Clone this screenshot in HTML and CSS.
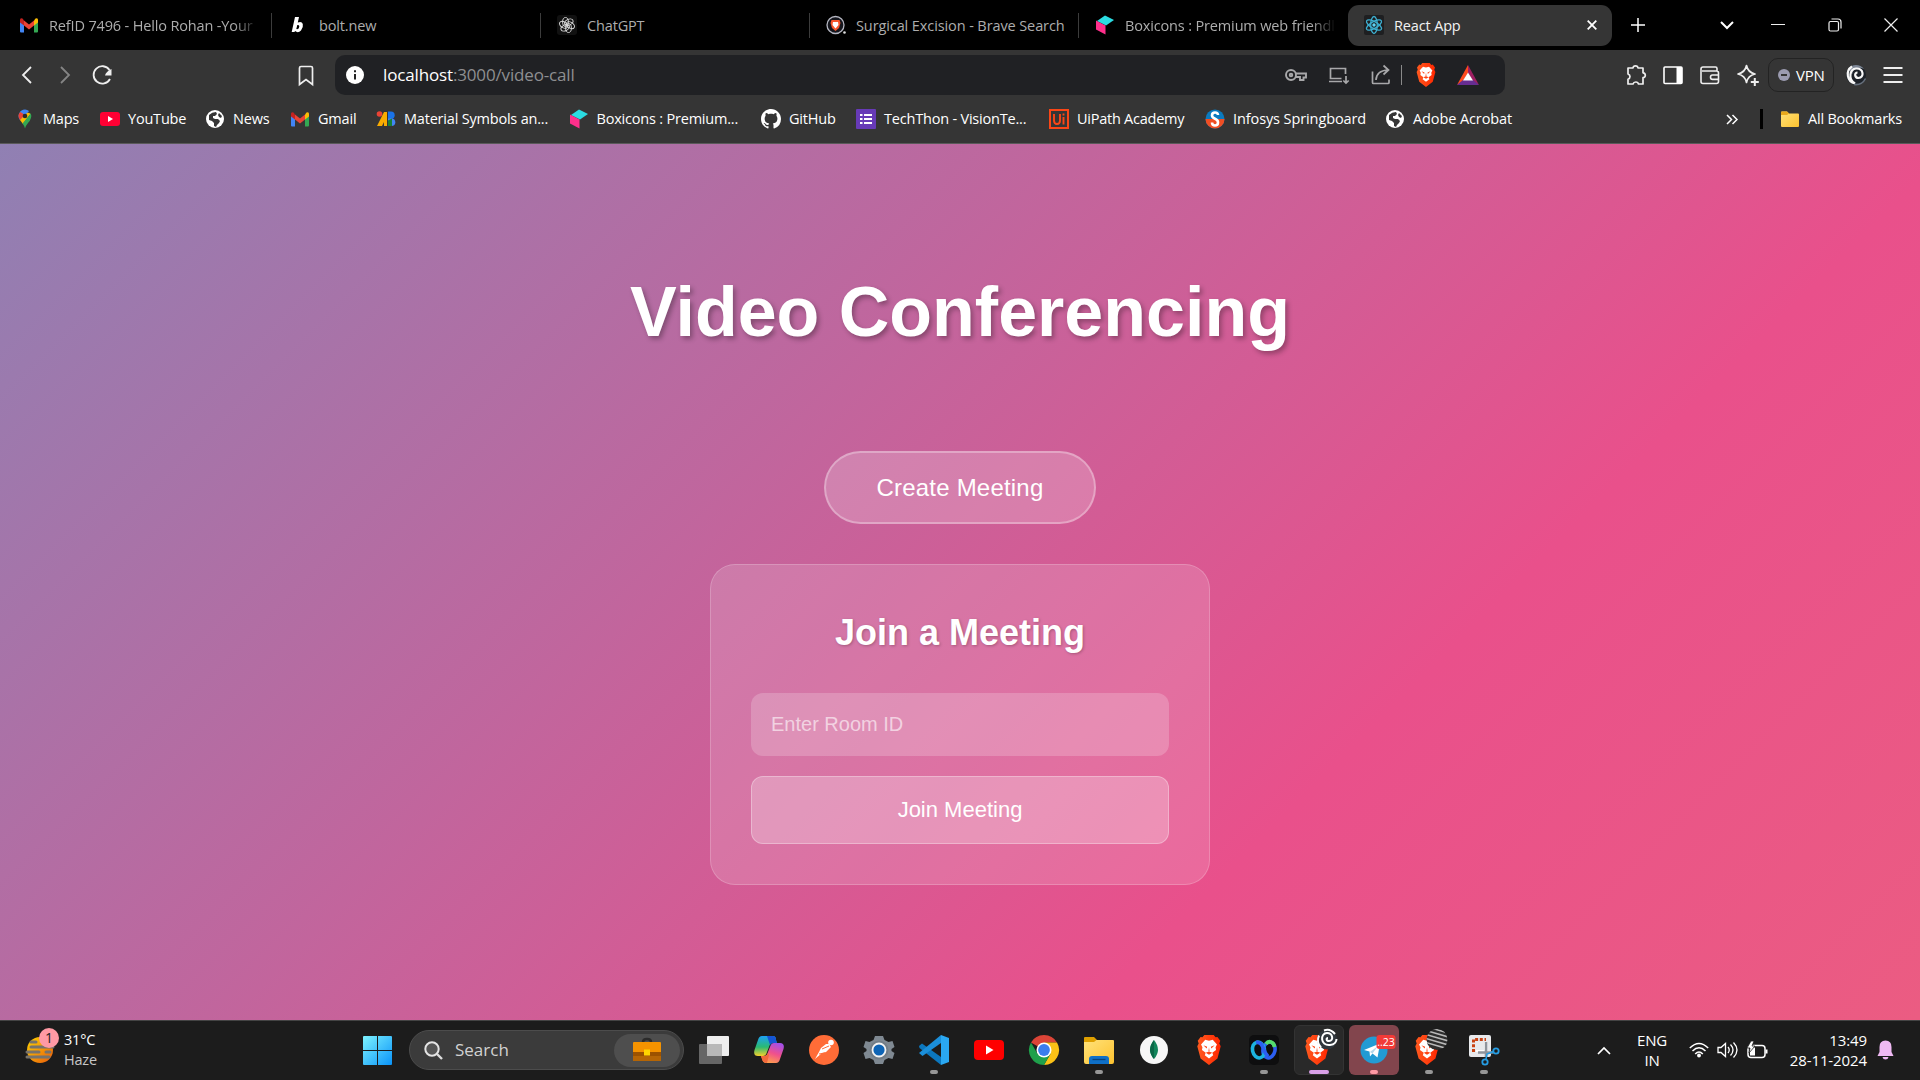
FILE: index.html
```html
<!DOCTYPE html>
<html lang="en">
<head>
<meta charset="utf-8">
<title>React App</title>
<link rel="stylesheet" href="styles.css">
</head>
<body>
<svg class="defs" width="0" height="0">
  <defs>
    <linearGradient id="lionFill" x1="0" y1="0" x2="1" y2="0"><stop offset="0" stop-color="#ff5a1f"/><stop offset="1" stop-color="#ff2600"/></linearGradient>
    <linearGradient id="win" x1="0" y1="0" x2="1" y2="1"><stop offset="0" stop-color="#7df3ff"/><stop offset="1" stop-color="#0a93f8"/></linearGradient>
    <linearGradient id="fold" x1="0" y1="0" x2="1" y2="1"><stop offset="0" stop-color="#ffe27a"/><stop offset="1" stop-color="#fdc22f"/></linearGradient>
  </defs>
  <symbol id="gmail" viewBox="0 0 20 20"><path d="M1 4.5v12q0 1 1 1h3V9z" fill="#4285f4"/><path d="M19 4.5v12q0 1-1 1h-3V9z" fill="#34a853"/><path d="M1 5v2.5L5 10.500V5.500L3.500 3.500Q1 2.300 1 5z" fill="#c5221f"/><path d="M19 5v2.500L15 10.500V5.500l1.500-2Q19 2.300 19 5z" fill="#fbbc04"/><path d="M5 5.500l5 4 5-4v5l-5 4-5-4z" fill="#ea4335"/></symbol>
  <symbol id="lion" viewBox="0 0 26 32"><path d="M6 2.500L8 0h10l2 2.500 2-.5 3 4-1 3 1.500 3-3.500 13L13 32 4 25 .5 12 2 9 1 6l3-4z" fill="url(#lionFill)"/><path d="M13 6l4-1 4.500 5-1.500 3 .5 3-4 3 1 2.500L13 25l-4.500-3.500 1-2.500-4-3 .5-3-1.500-3L9 5z" fill="#fff"/><path d="M7 11l4 1.500-.5 2zM19 11l-4 1.500.5 2zM13 13l-.7 5h1.400zM9.500 19l3.500-1.500 3.500 1.500-3.500 2z" fill="#ff4312"/></symbol>
  <symbol id="globe" viewBox="0 0 20 20"><circle cx="10" cy="10" r="9" fill="#fff"/><path d="M4 6Q7 3 11 3l1 2-2 2H8v2l2 1h3l2 2-1 2-2 2-1 2-2-1v-3l-2-2-3-1zM14 4l3 3-1 2-2-1-1-2z" fill="#353535"/></symbol>
  <symbol id="boxicons" viewBox="0 0 20 20"><path d="M10 .5l9 4.500-8 5.500-9-4.500z" fill="#2bdce2"/><path d="M1 5.500l9.500 5v9L1 14.500z" fill="#ff2f8b"/></symbol>
</svg>

<div class="browser">
  <header class="tabs">
    <div class="tab"><svg class="fav"><use href="#gmail"/></svg><span class="fade">RefID 7496 - Hello Rohan -Your</span></div>
    <div class="tab"><svg class="fav bolt" viewBox="0 0 20 20"><path d="M7 2h4L9.800 7.500q4-1.500 5 1.500.8 3.500-1.800 6.500-3 3-6 .5L6.500 17H3.700zM9.300 10l-1 4q2.700.8 3-2.500.1-2-2-1.500z" fill="#fff" fill-rule="evenodd"/></svg><span>bolt.new</span></div>
    <div class="tab"><svg class="fav" viewBox="0 0 20 20"><rect width="20" height="20" rx="3" fill="#111"/><g fill="none" stroke="#ddd" stroke-width=".9"><ellipse cx="8.500" cy="7" rx="2.900" ry="4.500" transform="rotate(0 10 10)"/><ellipse cx="8.500" cy="7" rx="2.900" ry="4.500" transform="rotate(60 10 10)"/><ellipse cx="8.500" cy="7" rx="2.900" ry="4.500" transform="rotate(120 10 10)"/><ellipse cx="8.500" cy="7" rx="2.900" ry="4.500" transform="rotate(180 10 10)"/><ellipse cx="8.500" cy="7" rx="2.900" ry="4.500" transform="rotate(240 10 10)"/><ellipse cx="8.500" cy="7" rx="2.900" ry="4.500" transform="rotate(300 10 10)"/></g></svg><span>ChatGPT</span></div>
    <div class="tab"><svg class="fav" viewBox="0 0 20 20"><circle cx="9.500" cy="10" r="8.500" fill="#14151c" stroke="#b5b7c2" stroke-width="1.300"/><path d="M5.500 5h8l1 3-1.500 5-3.500 3-3.500-3-1.500-5z" fill="#f7552b"/><path d="M7 7h5l.5 3-3 3.500-3-3.500z" fill="#fff"/><circle cx="18.500" cy="17.500" r="1.300" fill="#ddd"/></svg><span class="wide">Surgical Excision - Brave Search</span></div>
    <div class="tab last"><svg class="fav"><use href="#boxicons"/></svg><span class="fade">Boxicons : Premium web friendl</span></div>
    <div class="tab active"><svg class="fav" viewBox="0 0 20 20"><rect width="20" height="20" rx="2" fill="#1e1f21"/><g fill="none" stroke="#3dafd0" stroke-width="1.300"><ellipse cx="10" cy="10" rx="8.500" ry="3.300" transform="rotate(90 10 10)"/><ellipse cx="10" cy="10" rx="8.500" ry="3.300" transform="rotate(30 10 10)"/><ellipse cx="10" cy="10" rx="8.500" ry="3.300" transform="rotate(150 10 10)"/></g><circle cx="10" cy="10" r="1.700" fill="#5dd5f5"/></svg><span>React App</span><svg class="close" viewBox="0 0 10 10"><path d="M.7.7l8.600 8.600M9.300.7L.7 9.300" stroke="#fff" stroke-width="1.800"/></svg></div>
    <svg class="plus" viewBox="0 0 14 14"><path d="M7 0v14M0 7h14" stroke="#fff" stroke-width="1.500"/></svg>
    <div class="winctl">
      <svg width="14" height="10" viewBox="0 0 14 10"><path d="M1 2l6 6 6-6" fill="none" stroke="#fff" stroke-width="2"/></svg>
      <svg width="14" height="14" viewBox="0 0 14 14"><path d="M0 6.500h14" stroke="#eee"/></svg>
      <svg width="14" height="14" viewBox="0 0 14 14"><rect x="1" y="3.500" width="9.500" height="9.500" rx="1.500" fill="none" stroke="#eee" stroke-width="1.200"/><path d="M3.500 1h6.500q3 0 3 3v6.500" fill="none" stroke="#eee" stroke-width="1.200"/></svg>
      <svg width="14" height="14" viewBox="0 0 14 14"><path d="M.5.500l13 13M13.500.500l-13 13" stroke="#eee" stroke-width="1.200"/></svg>
    </div>
  </header>

  <nav class="toolbar">
    <div class="nav">
      <svg class="ico" viewBox="0 0 24 24"><path d="M16 4l-8 8 8 8" stroke="#eee" stroke-width="1.800"/></svg>
      <svg class="ico" viewBox="0 0 24 24"><path d="M8 4l8 8-8 8" stroke="#858585" stroke-width="1.800"/></svg>
      <svg class="ico" viewBox="0 0 24 24"><path d="M19.500 7A8.700 8.700 0 1 0 20 16" stroke="#eee" stroke-width="1.800"/><path d="M21.500 6v6.500h-6.500q1-4 6.500-6.500z" fill="#eee"/></svg>
    </div>
    <svg class="ico mark" viewBox="0 0 24 24"><path d="M5.500 5q0-1.500 1.500-1.500h10q1.500 0 1.500 1.500v16.500L12 16.500l-6.500 5z" stroke="#eee" stroke-width="1.700"/></svg>
    <div class="address">
      <svg class="info" viewBox="0 0 18 18"><circle cx="9" cy="9" r="9" fill="#fff"/><path d="M9 8v5.500M9 4.200v2" stroke="#222" stroke-width="2"/></svg>
      <span class="url"><b>localhost</b>:3000/video-call</span>
      <div class="acts">
        <svg class="ico" viewBox="0 0 24 24"><g stroke="#a8a8aa" stroke-width="1.900"><circle cx="7" cy="12" r="5"/><circle cx="7" cy="12" r="1.300"/><path d="M12 10.500h10v4h-2.500v2.500h-3.500v-3h-4"/></g></svg>
        <svg class="ico" viewBox="0 0 24 24"><g stroke="#a8a8aa" stroke-width="1.700"><path d="M19.500 11V5.500H4.500v10h11M3 18.500h13M20 13v7M17.300 17.500l2.700 2.500 2.700-2.500"/></g></svg>
        <svg class="ico" viewBox="0 0 24 24"><g stroke="#a8a8aa" stroke-width="1.700"><path d="M3.500 8.500v11q0 1 1 1h14.500q1 0 1-1v-3M7 17Q7.500 7.500 19 7M14.500 2.500l5 4.500-5 4.500"/></g></svg>
        <i class="vline"></i>
        <svg class="ico shield"><use href="#lion"/></svg>
        <svg class="ico" viewBox="0 0 24 24"><path d="M12 2v8l-5 8-6 4z" fill="#ff4a1d"/><path d="M12 2v8l5 8 6 4z" fill="#9e1f63"/><path d="M1 22h22l-6-5H7z" fill="#662d91"/><path d="M12 9.500l5 8H7z" fill="#fff"/></svg>
      </div>
    </div>
    <div class="exts">
      <svg class="ico" viewBox="0 0 24 24"><path d="M4 5h5q.2-2.200 2.500-2.200T14 5h5v4.800q2.300.2 2.300 2.400T19 14.700V21h-4.500q-.5-2-2.700-2T9 21H4v-4.800q2-.6 2-2.600t-2-2.600z" stroke="#eee" stroke-width="1.700" stroke-linejoin="round"/></svg>
      <svg class="ico" viewBox="0 0 24 24"><rect x="3" y="4" width="18" height="16.500" rx="1" stroke="#fff" stroke-width="1.600"/><path d="M15.500 4H21v16.500h-5.500z" fill="#fff"/></svg>
      <svg class="ico" viewBox="0 0 24 24"><path d="M19 8V5.500Q19 4 17.500 4H5Q3 4 3 6v12.500q0 2 2 2h13.500q2 0 2-2V10q0-2-2-2H4M21 12h-6.500q-2 0-2 2.200t2 2.200H21" stroke="#eee" stroke-width="1.600"/></svg>
      <svg class="ico" viewBox="0 0 24 24"><path d="M10.500 2.500q1.500 7 8.500 8.500-7 1.500-8.500 8.500-1.500-7-8.500-8.500 7-1.500 8.500-8.500z" stroke="#eee" stroke-width="1.700" stroke-linejoin="round"/><path d="M18.800 15v8M14.800 19h8" stroke="#eee" stroke-width="2"/></svg>
      <div class="vpn"><i></i>VPN</div>
      <svg class="ico" viewBox="0 0 24 24"><circle cx="12" cy="12" r="10" fill="#1d2229"/><path d="M4.500 5.500Q7 2 12 2t8 4q-4-2-8-.5T8.500 11z" fill="#7d8695"/><path d="M8 3.500C1 8 3 19 11 20.500 3.500 16 6 6 12 5.500c8-.5 8.500 9.500 2.500 9.500-4 0-4.500-5.500-1-5.500" fill="none" stroke="#f7f7f7" stroke-width="2.200"/><path d="M10 21.500q8 1 11.500-6" stroke="#66707d" stroke-width="1.500"/></svg>
      <svg class="ico menu" viewBox="0 0 24 24"><path d="M2.500 5h19M2.500 12h19M2.500 19h19" stroke="#eee" stroke-width="1.800"/></svg>
    </div>
  </nav>

  <nav class="bookmarks">
    <div class="bm"><svg class="fav" viewBox="0 0 20 20"><path d="M10 .5a6.500 6.500 0 0 0-5 10.500l5-4 4-5A6.500 6.500 0 0 0 10 .5z" fill="#4285f4"/><path d="M3.500 6.500q0 2.500 1.700 4.700L10 6 5.400 3q-1.900 1.500-1.900 3.500z" fill="#ea4335"/><path d="M5 11l3 4 7.500-10Q13.500 3 12 4z" fill="#fbbc04"/><path d="M7.500 14.500q2 2.500 2.500 5 .5-2.500 3-5.500 4.500-5 2.800-9.800z" fill="#34a853"/><circle cx="10" cy="7" r="2.300" fill="#2b2b2b"/></svg><span>Maps</span></div>
    <div class="bm"><svg class="fav" viewBox="0 0 20 20"><rect y="3" width="20" height="14" rx="3" fill="#ff0033"/><path d="M8 7l5 3-5 3z" fill="#fff"/></svg><span>YouTube</span></div>
    <div class="bm"><svg class="fav"><use href="#globe"/></svg><span>News</span></div>
    <div class="bm"><svg class="fav"><use href="#gmail"/></svg><span>Gmail</span></div>
    <div class="bm"><svg class="fav" viewBox="0 0 20 20"><circle cx="3.500" cy="5" r="2.800" fill="#ea4335"/><path d="M8 3h3v14H8v-4L6 17H1z" fill="#f9ab00"/><path d="M12 2.500h3a3.700 3.700 0 0 1 0 7.400h-3z" fill="#1a73e8"/><path d="M12 9.500h3.500a3.800 3.800 0 0 1 0 7.600H12z" fill="#4285f4"/><path d="M12 11.500l4-2v7.600h-4z" fill="#188038"/></svg><span>Material Symbols an...</span></div>
    <div class="bm"><svg class="fav"><use href="#boxicons"/></svg><span>Boxicons : Premium...</span></div>
    <div class="bm"><svg class="fav" viewBox="0 0 16 16"><path fill="#fff" d="M8 0C3.580 0 0 3.580 0 8c0 3.540 2.290 6.530 5.470 7.590.4.070.55-.17.55-.38 0-.19-.01-.82-.01-1.490-2.010.37-2.530-.49-2.690-.94-.09-.23-.48-.94-.82-1.130-.28-.15-.68-.52-.01-.53.63-.01 1.080.58 1.230.82.72 1.210 1.870.87 2.330.66.070-.52.28-.87.510-1.070-1.780-.2-3.640-.89-3.640-3.950 0-.87.31-1.590.82-2.150-.08-.2-.36-1.020.08-2.120 0 0 .67-.21 2.200.82.64-.18 1.320-.27 2-.27s1.360.09 2 .27c1.530-1.040 2.200-.82 2.200-.82.44 1.100.16 1.920.08 2.120.51.56.82 1.270.82 2.150 0 3.070-1.870 3.750-3.650 3.950.29.25.54.73.54 1.480 0 1.070-.01 1.930-.01 2.200 0 .21.15.46.55.38A8.010 8.010 0 0 0 16 8c0-4.420-3.580-8-8-8z"/></svg><span>GitHub</span></div>
    <div class="bm"><svg class="fav" viewBox="0 0 20 20"><rect width="20" height="20" rx="1" fill="#673ab7"/><path d="M4 6h2.500M4 10h2.500M4 14h2.500M8 6h8M8 10h8M8 14h8" stroke="#fff" stroke-width="2.200"/></svg><span>TechThon - VisionTe...</span></div>
    <div class="bm"><svg class="fav" viewBox="0 0 20 20"><path d="M1 1h18v18H1z" fill="none" stroke="#fa4616" stroke-width="2"/><path d="M5 5v6.500q0 3.500 3 3.500t3-3.500V5M14.500 8v7.500M14.500 4.500v2" fill="none" stroke="#fa4616" stroke-width="1.900"/></svg><span class="tight">UiPath Academy</span></div>
    <div class="bm"><svg class="fav" viewBox="0 0 20 20"><circle cx="10" cy="10" r="9.500" fill="#0a7abf"/><path d="M.5 10A9.500 9.500 0 0 0 19.500 10z" fill="#f04e23"/><path d="M13 6q0-2.500-3-2.500T7 6.500q0 2 3 3.300t3 3.700q0 3-3 3t-3-3" fill="none" stroke="#fff" stroke-width="2.600"/></svg><span class="wide">Infosys Springboard</span></div>
    <div class="bm"><svg class="fav"><use href="#globe"/></svg><span class="wide">Adobe Acrobat</span></div>
    <div class="more">
      <svg width="12" height="11" viewBox="0 0 12 11"><path d="M1 1l4.500 4.500L1 10M6.500 1L11 5.500 6.500 10" fill="none" stroke="#fff" stroke-width="1.500"/></svg>
      <i></i>
      <svg class="fav" viewBox="0 0 20 20"><path d="M1 3.500q0-1 1-1h5l2 2h9q1 0 1 1V17q0 1-1 1H2q-1 0-1-1z" fill="url(#fold)"/><path d="M1 3.500q0-1 1-1h5l2 2-2 1.500H1z" fill="#e9a91c"/></svg>
      <span>All Bookmarks</span>
    </div>
  </nav>
</div>

<main class="page">
  <h1>Video Conferencing</h1>
  <button class="create">Create Meeting</button>
  <section class="card">
    <h2>Join a Meeting</h2>
    <input type="text" placeholder="Enter Room ID">
    <button class="join">Join Meeting</button>
  </section>
</main>

<footer class="taskbar">
  <div class="weather">
    <svg width="36" height="38" viewBox="0 0 36 38"><defs><linearGradient id="sun" x1="0" y1="0" x2="1" y2="1"><stop offset="0" stop-color="#ffd400"/><stop offset="1" stop-color="#e8590c"/></linearGradient></defs><circle cx="15" cy="22" r="13" fill="url(#sun)"/><path d="M6 14h5M6 19h22M2 24h12M21 24h4M2 29h22" stroke="#77736c" stroke-width="3" stroke-linecap="round"/><circle cx="24" cy="10" r="10" fill="#ff99a4"/><text x="24" y="15" text-anchor="middle" class="count">1</text></svg>
    <div class="temp"><span>31°C</span><span class="dim">Haze</span></div>
  </div>
  <svg class="start" viewBox="0 0 29 29"><path d="M0 1q0-1 1-1h13v14H0zM15 0h13q1 0 1 1v13H15zM0 15h14v14H1q-1 0-1-1zM15 15h14v13q0 1-1 1H15z" fill="url(#win)"/></svg>
  <div class="search">
    <svg width="19" height="19" viewBox="0 0 19 19"><circle cx="8" cy="8" r="6.700" fill="#555" stroke="#e5e5e5" stroke-width="2"/><path d="M13 13l5 5" stroke="#ddd" stroke-width="2.400"/></svg>
    <span>Search</span>
    <div class="brief"><svg width="28" height="24" viewBox="0 0 28 24"><path d="M10 4q0-3 4-3t4 3" fill="none" stroke="#2b2b2b" stroke-width="2.500"/><rect y="4" width="28" height="19" rx="1" fill="#f59300"/><path d="M0 14h28v8q0 1-1 1H1q-1 0-1-1z" fill="#9c5200"/><path d="M0 18h28v5H0z" fill="#b56505"/><rect x="11" y="11.500" width="6" height="6" fill="#ffd500"/></svg></div>
  </div>
  <div class="apps">
    <div class="app"><svg viewBox="0 0 30 30"><rect x="8" y="1" width="22" height="20" rx="1" fill="#eee"/><rect x="0" y="9" width="23" height="20" rx="1" fill="#666"/><path d="M8 9h15v12H8z" fill="#b8b8b8"/></svg></div>
    <div class="app"><svg viewBox="0 0 30 30"><defs><linearGradient id="cp1" x1="0" y1="0" x2="0" y2="1"><stop offset="0" stop-color="#1da1f5"/><stop offset=".55" stop-color="#2aba72"/><stop offset="1" stop-color="#f5d02c"/></linearGradient><linearGradient id="cp2" x1=".7" y1="0" x2=".3" y2="1"><stop offset="0" stop-color="#a34fe8"/><stop offset=".5" stop-color="#f0508c"/><stop offset="1" stop-color="#ffa24a"/></linearGradient></defs><path d="M8 1h11q3 0 3 4l1 3h-4q-3 0-4 4l-2 5q-1 4-4 4H4q-5 0-3.500-6L4 5q1-4 4-4z" fill="url(#cp1)"/><path d="M13 1h6q3 0 3 4l1 3h-4q-2 0-3 2z" fill="#1555d4"/><path d="M22 28H12q-3 0-4-4l-1-3h3q3 0 4-4l2-5q1-4 4-4h6q5 0 3.500 6L26 24q-1 4-4 4z" fill="url(#cp2)"/><path d="M7 21h4q2 0 3-3l1 2-2 8q-4 0-5-4z" fill="#f2683c"/></svg></div>
    <div class="app"><svg viewBox="0 0 30 30"><circle cx="15" cy="15" r="15" fill="#ff6c37"/><circle cx="22" cy="7.500" r="2.800" fill="#fff"/><path d="M20 9l2 3-5 5-4 1-7 6 4-7 2-4 5-4z" fill="#fff"/><path d="M13 14l7-3M10 19l6-1" stroke="#ff6c37"/></svg></div>
    <div class="app"><svg viewBox="0 0 30 30"><path d="M11 1h8l1.500 4 4 2 4-1 2 6-3 2v2l3 2-2 6-4-1-4 2-1.500 4h-8L9.500 25l-4-2-4 1-2-6 3-2v-2l-3-2 2-6 4 1 4-2z" fill="#7f8992"/><circle cx="15" cy="15" r="9.500" fill="#737d86"/><circle cx="15" cy="15" r="6.500" fill="#0e64b5" stroke="#f4f4f4" stroke-width="1.800"/></svg></div>
    <div class="app run"><svg viewBox="0 0 30 30"><path d="M0 11l3-2.500 19 13.500v8L.5 13z" fill="#0c77be"/><path d="M0 18l3.500 3L22 8V0z" fill="#1b8fda"/><path d="M22 0l8 3v24l-8 3z" fill="#2aa8f2"/></svg></div>
    <div class="app"><svg viewBox="0 0 30 30"><rect y="5" width="30" height="20" rx="4" fill="#f00"/><path d="M12 10.500l7.500 4.500-7.500 4.500z" fill="#fff"/></svg></div>
    <div class="app"><svg viewBox="0 0 30 30"><path d="M15 15L2 7.500A15 15 0 0 1 28 7.500H15z" fill="#db4437"/><path d="M15 15l6.500 3.800L15 30a15 15 0 0 0 13-22.500H15z" fill="#fbc116"/><path d="M2 7.500A15 15 0 0 0 15 30l6.500-11.200H8.500z" fill="#1fa04b"/><circle cx="15" cy="15" r="7.500" fill="#fff"/><circle cx="15" cy="15" r="5.900" fill="#3b7ded"/></svg></div>
    <div class="app run"><svg viewBox="0 0 30 30"><path d="M0 3q0-1 1-1h9l3 3v5H0z" fill="#dfa000"/><path d="M0 7h10l2.500-2H29q1 0 1 1v21q0 2-2 2H2q-2 0-2-2z" fill="url(#fold)"/><path d="M5 29v-5q0-3 3-3h14q3 0 3 3v5z" fill="#0f70c8"/><path d="M8.500 24.500h13" stroke="#08427c" stroke-width="1.300"/></svg></div>
    <div class="app"><svg viewBox="0 0 30 30"><circle cx="15" cy="15" r="14" fill="#f7f7f7"/><path d="M15 5q8 10 0 19-8-9 0-19z" fill="#12865b"/><path d="M15 5q-8 10 0 19z" fill="#0b6848"/></svg></div>
    <div class="app"><svg viewBox="0 0 30 30"><use href="#lion" x="2" y="0" width="26" height="30"/></svg></div>
    <div class="app run"><svg viewBox="0 0 30 30"><rect width="30" height="30" rx="5" fill="#0e0e0f"/><ellipse cx="20" cy="15" rx="6" ry="8" transform="rotate(12 20 15)" fill="none" stroke="#2c5ff2" stroke-width="3.600"/><ellipse cx="9.500" cy="15" rx="6" ry="8" transform="rotate(-12 9.500 15)" fill="none" stroke="#1cb4e0" stroke-width="3.600"/><path d="M7 7.500q5-1 7 5t5 9" fill="none" stroke="#2c5ff2" stroke-width="3.800"/><path d="M17 9q2-3 5-2 3 1 3.500 5" fill="none" stroke="#54dc6c" stroke-width="3.800"/></svg></div>
    <div class="app run current"><svg viewBox="0 0 30 30"><use href="#lion" x="0" y="0" width="26" height="30"/><circle cx="23" cy="4.500" r="10" fill="#30363c"/><g fill="none" stroke="#fff" stroke-width="2"><path d="M24 3c-2 0-2 3 1 3 5 0 4-8-2-8-7 0-7 13 3 12 5-.5 6.500-4 6.500-6M15 .5Q12 7 17 12.500M20-4.500Q26-7 31-1"/></g></svg></div>
    <div class="app run alert"><svg viewBox="0 0 30 30"><circle cx="15" cy="15" r="13.500" fill="#229bd4"/><path d="M5 15l16-6.500-2.500 14-5-4-2.500 3-.5-5z" fill="#fff"/><path d="M11 17l8-6-5.500 7.500z" fill="#b5d7e9"/><rect x="17.500" y="0" width="19" height="14" rx="3" fill="#f23a37"/><text x="27" y="11" text-anchor="middle" class="badge">..23</text></svg></div>
    <div class="app run"><svg viewBox="0 0 30 30"><defs><clipPath id="orb"><circle cx="23" cy="4.500" r="10.500"/></clipPath></defs><use href="#lion" x="0" y="0" width="26" height="30"/><g clip-path="url(#orb)"><path d="M12-8h26v26H12z" fill="#2e2e2e"/><path d="M10-5l28 8M10-1l28 8M10 3l28 8M10 7l28 8M10-9l28 8M10-13l28 8" stroke="#b9b9b9" stroke-width="1.500"/></g></svg></div>
    <div class="app run"><svg viewBox="0 0 30 30"><rect x="0" y="0" width="22" height="22" rx="2" fill="#e8e9ec"/><path d="M4.500 17V4.500H17" fill="none" stroke="#c94212" stroke-width="3" stroke-dasharray="3 1.700"/><path d="M7 16h9V7" fill="none" stroke="#fff" stroke-width="2"/><path d="M17 7v15M9 17.500h15" stroke="#8e949c" stroke-width="2.500"/><circle cx="27" cy="16" r="2.700" fill="none" stroke="#259ce2" stroke-width="1.800"/><circle cx="16" cy="27" r="2.700" fill="none" stroke="#259ce2" stroke-width="1.800"/><path d="M24.500 16.500L18 19l-1 5" fill="none" stroke="#259ce2" stroke-width="1.500"/></svg></div>
  </div>
  <div class="tray">
    <svg width="14" height="9" viewBox="0 0 14 9"><path d="M1 8l6-6 6 6" fill="none" stroke="#fff" stroke-width="1.700"/></svg>
    <div class="lang"><span>ENG</span><span>IN</span></div>
    <svg class="wifi" width="20" height="16" viewBox="0 0 20 16"><g fill="none" stroke="#fff" stroke-width="1.500"><path d="M.8 6q9.200-9 18.400 0M3.500 9q6.500-6.500 13 0M6.200 12q3.800-4 7.600 0"/></g><circle cx="10" cy="13.500" r="1.900" fill="#fff"/></svg>
    <svg class="vol" width="21" height="18" viewBox="0 0 21 18"><g fill="none" stroke="#fff" stroke-width="1.300"><path d="M1 6.500h3L8.500 2.500v13L4 11.500H1zM11 6q2.500 3 0 6M13.500 3.500q5 5.500 0 11M16.500 1.500q7 7.500 0 15"/></g></svg>
    <svg class="bat" width="22" height="18" viewBox="0 0 22 18"><rect x="1" y="4.500" width="17" height="12" rx="3" fill="none" stroke="#fff" stroke-width="1.500"/><path d="M3 6.500h5v8H3zM18.500 8.500h2v4h-2z" fill="#fff"/><path d="M4 0L0 7h3l-1 5 6-7H5l2-5z" fill="#fff" stroke="#1c1c1c" stroke-width=".8"/></svg>
    <div class="clock"><span>13:49</span><span>28-11-2024</span></div>
    <svg class="bell" width="17" height="20" viewBox="0 0 17 20"><path d="M8.500.5q6 0 6 6.500v5l2 4H.5l2-4V7q0-6.500 6-6.500zM5.500 17h6q-.5 2.500-3 2.500t-3-2.500z" fill="#efb9f3"/></svg>
  </div>
</footer>
</body>
</html>
```
FILE: styles.css
```css
* { box-sizing: border-box; }
body { margin: 0; width: 1920px; height: 1080px; overflow: hidden; display: flex; flex-direction: column; font-family: "Open Sans", "Noto Sans", sans-serif; color: #fff; }
svg { display: block; flex: none; overflow: visible; }
.defs { position: absolute; }
.fav { width: 20px; height: 20px; }
.ico { width: 24px; height: 24px; fill: none; }

.browser { height: 144px; background: #353535; border-bottom: 1px solid #5a5a5a; font-size: 14.500px; flex: none; }
.tabs { height: 50px; background: #000; display: flex; align-items: center; padding-left: 3px; }
.tab { width: 269px; height: 25px; display: flex; align-items: center; gap: 10px; padding: 0 12px 0 16px; border-right: 1px solid #3c3c3c; color: #adadad; white-space: nowrap; letter-spacing: -.15px; }
.tab.last { border-right: 0; }
.tab .fade { overflow: hidden; flex: 1; mask-image: linear-gradient(90deg, #000 88%, transparent 100%); }
.tab.active { width: 264px; height: 41px; margin-left: 0; padding-right: 15px; background: #353535; border: 0; border-radius: 11px; color: #f2f2f2; }
.bolt { margin-right: 1px; }
.close { width: 10px; height: 10px; margin-left: auto; }
.plus { width: 14px; height: 14px; margin-left: 19px; }
.winctl { display: flex; align-items: center; gap: 42.500px; margin-left: auto; padding-right: 22px; }
.winctl svg:first-child { margin-right: -5px; }

.toolbar { height: 50px; display: flex; align-items: center; padding-left: 15px; padding-right: 15px; }
.nav { display: flex; gap: 13.500px; }
.mark { margin-left: 180px; }
.address { width: 1170px; height: 40px; margin-left: 17px; border-radius: 10px; background: #202124; display: flex; align-items: center; padding: 0 25px 0 11px; }
.info { width: 18px; height: 18px; }
.url { margin: -2px 0 0 19px; font-size: 17px; color: #8e8f91; letter-spacing: -.15px; }
.url b { font-weight: 400; color: #fff; }
.acts { display: flex; align-items: center; gap: 18.500px; margin-left: auto; }
.vline { width: 1px; height: 20px; background: #8a8a8a; margin: 0 -7px 0 -10px; }
.exts { display: flex; align-items: center; gap: 13.400px; margin-left: auto; }
.vpn { width: 66px; height: 34px; margin: 0 -4px 0 -5px; border: 1px solid #232323; border-radius: 10px; display: flex; align-items: center; justify-content: center; gap: 6px; font-size: 15px; letter-spacing: -.3px; }
.vpn i { width: 12px; height: 12px; border-radius: 50%; background: linear-gradient(#353535, #353535) center / 6px 2px no-repeat #9b9bb0; }

.bookmarks { height: 38px; display: grid; grid-template-columns: 85px 105px 85px 86px 192.500px 192.500px 95px 193px 156px 180px 150px 1fr; align-items: center; padding: 0 18px 0 15px; letter-spacing: -.2px; white-space: nowrap; }
.bookmarks span { margin-top: -2px; }
.wide { letter-spacing: -.1px; }
.tight { letter-spacing: -.25px; }
.bm { display: flex; align-items: center; gap: 8px; }
.more { display: flex; align-items: center; justify-content: flex-end; gap: 8px; }
.more i { width: 3px; height: 20px; background: #000; margin: 0 9px 0 14px; }

.page { flex: 1; display: flex; flex-direction: column; align-items: center; font-family: "Liberation Sans", Arial, sans-serif; background: linear-gradient(135deg, #9080b3 0%, #e9508b 70%, #eb5c82 100%); }
h1 { margin: 128px 0 0; font-size: 70px; line-height: 80px; text-shadow: 2.500px 2.500px 5px rgba(0, 0, 0, .3); }
.create { width: 272px; height: 73px; margin-top: 99px; border: 2px solid rgba(255, 255, 255, .3); border-radius: 37px; background: rgba(255, 255, 255, .2); font: 24px "Liberation Sans", Arial, sans-serif; letter-spacing: .2px; color: #fff; }
.card { width: 500px; height: 321px; margin-top: 40px; padding: 47px 40px 40px; border: 1px solid rgba(255, 255, 255, .2); border-radius: 25px; background: rgba(255, 255, 255, .15); display: flex; flex-direction: column; }
h2 { margin: 0; font-size: 36px; line-height: 42px; text-align: center; text-shadow: 1px 1px 3px rgba(0, 0, 0, .25); }
.card input { height: 63px; margin-top: 39px; padding: 0 20px; border: 0; border-radius: 12px; background: rgba(255, 255, 255, .2); font: 20px "Liberation Sans", Arial, sans-serif; color: #fff; }
.card input::placeholder { color: rgba(255, 255, 255, .6); }
.join { height: 68px; margin-top: 20px; border: 1px solid rgba(255, 255, 255, .3); border-radius: 12px; background: rgba(255, 255, 255, .25); font: 22px "Liberation Sans", Arial, sans-serif; color: #fff; }

.taskbar { height: 60px; flex: none; background: #1c1c1c; border-top: 1px solid #444; padding-bottom: 1px; display: flex; align-items: center; font-size: 14.500px; line-height: 20px; }
.weather { width: 338px; padding-left: 25px; display: flex; gap: 3px; align-items: center; }
.weather svg { margin-top: -6px; }
.count { font-size: 14px; fill: #222; }
.temp, .lang, .clock { display: flex; flex-direction: column; letter-spacing: -.2px; margin-top: -1px; }
.dim { color: #c6c6c6; }
.start { width: 29px; height: 29px; margin-left: 25px; }
.search { width: 275px; height: 40px; margin-left: 17px; border-radius: 20px; border: 1px solid #4c4c4c; background: #3b3b3b; display: flex; align-items: center; padding: 0 3px 0 14px; font-size: 17px; color: #d2d2d2; }
.search span { margin-left: 12px; }
.brief { width: 66px; height: 33px; border-radius: 17px; background: #4e4e4e; margin-left: auto; display: flex; align-items: center; justify-content: center; }
.apps { display: flex; gap: 5px; margin-left: 5px; }
.app { width: 50px; height: 50px; border-radius: 6px; display: flex; align-items: center; justify-content: center; position: relative; }
.app > svg { width: 30px; height: 30px; }
.app.run::after { content: ""; position: absolute; left: 21px; bottom: 1px; width: 8px; height: 4px; border-radius: 2px; background: #969696; }
.app.current { background: #292929; border: 1px solid #333; }
.app.current::after { left: 14px; bottom: 0; width: 20px; background: #d9a0e8; }
.app.alert { background: #82454d; }
.app.alert::after { background: #ff99a4; }
.badge { font-size: 10.500px; fill: #fff; }
.tray { display: flex; align-items: center; margin-left: auto; padding-right: 26px; }
.lang { width: 40px; margin-left: 21px; align-items: center; font-size: 15px; }
.wifi { margin-left: 17px; }
.vol { margin-left: 8px; }
.bat { margin-left: 9px; }
.clock { width: 90px; margin-left: 8px; align-items: flex-end; font-size: 15px; letter-spacing: -.1px; }
.bell { margin-left: 10px; }
```
